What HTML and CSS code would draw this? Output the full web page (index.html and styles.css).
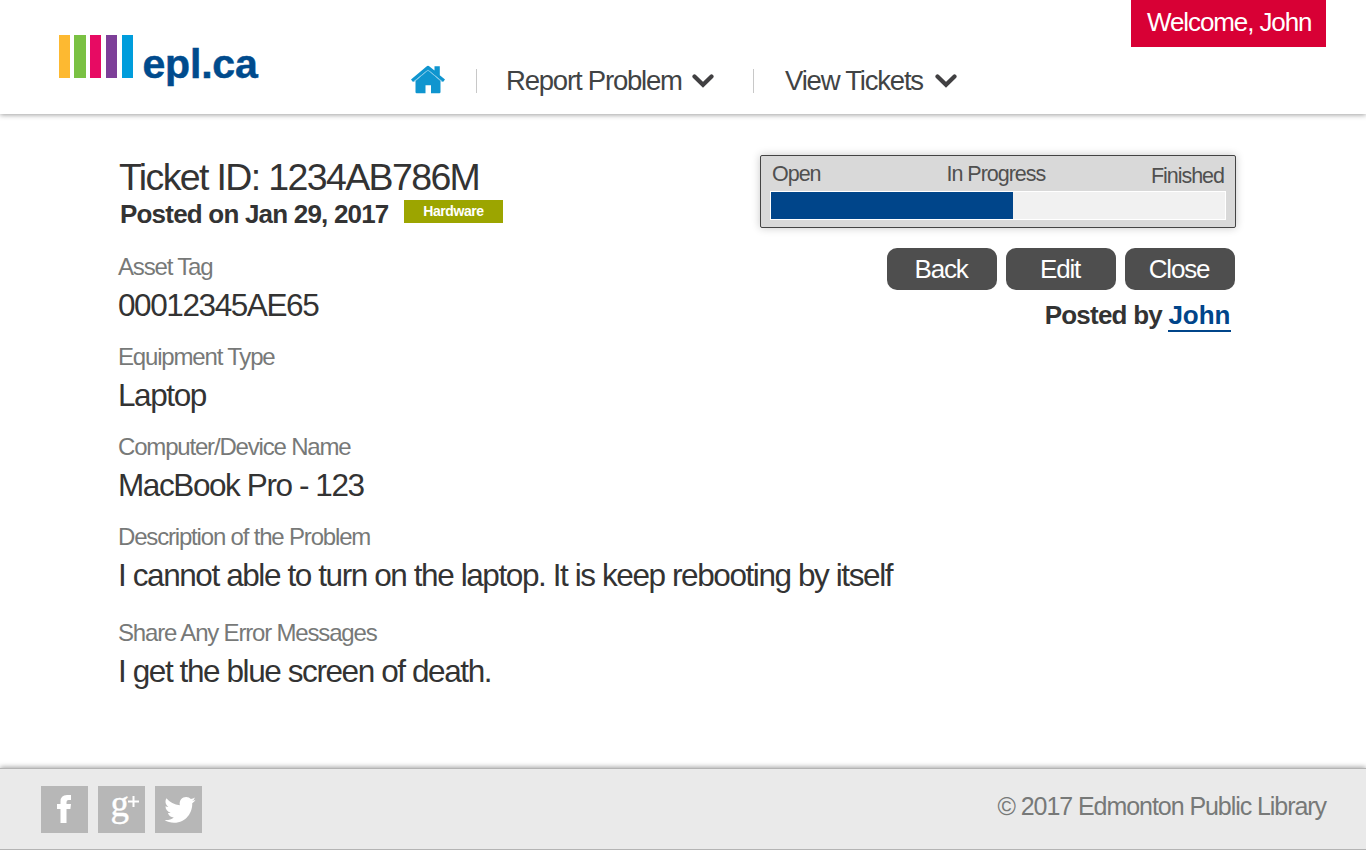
FILE: index.html
```html
<!DOCTYPE html>
<html lang="en">
<head>
<meta charset="utf-8">
<title>epl.ca – Ticket</title>
<link rel="stylesheet" href="styles.css">
</head>
<body>
<div class="page">
  <header class="header">
    <div class="logo">
      <div class="bars"><i class="bar yellow"></i><i class="bar green"></i><i class="bar pink"></i><i class="bar purple"></i><i class="bar blue"></i></div>
      <span class="logo-text">epl.ca</span>
    </div>
    <nav class="nav">
      <svg class="home" viewBox="0 0 34 29"><path fill="#0f95cf" d="M4.500 16 17 5l12.500 11V27q0 1.200-1.200 1.200H20v-8h-5.500v8H5.700Q4.500 28.200 4.500 27Z"/><path fill="#0f95cf" d="M0 14.600 15.500 1.400q1.500-1.200 3 0L23.500 5.600V1.200h5.300v9l5.200 4.400-2 2.300L17 4.800 2 16.900Z"/><path fill="none" stroke="#6fbfe5" stroke-width=".8" d="M3 16.500 17 5.300l14 11.200"/></svg>
      <i class="rule first"></i>
      <span class="item report">Report Problem</span>
      <svg class="chev" viewBox="0 0 22 14"><path d="M2.500 2.500 11 10.800l8.500-8.300"/></svg>
      <i class="rule second"></i>
      <span class="item tickets">View Tickets</span>
      <svg class="chev last" viewBox="0 0 22 14"><path d="M2.500 2.500 11 10.800l8.500-8.300"/></svg>
    </nav>
    <div class="welcome">Welcome, John</div>
  </header>

  <main class="main">
    <section class="details">
      <h1 class="title">Ticket ID: 1234AB786M</h1>
      <div class="posted"><span class="date">Posted on Jan 29, 2017</span><span class="tag">Hardware</span></div>
      <dl class="fields">
        <div class="field"><dt>Asset Tag</dt><dd>00012345AE65</dd></div>
        <div class="field"><dt>Equipment Type</dt><dd>Laptop</dd></div>
        <div class="field"><dt>Computer/Device Name</dt><dd>MacBook Pro - 123</dd></div>
        <div class="field tall"><dt>Description of the Problem</dt><dd>I cannot able to turn on the laptop. It is keep rebooting by itself</dd></div>
        <div class="field"><dt>Share Any Error Messages</dt><dd>I get the blue screen of death.</dd></div>
      </dl>
    </section>
    <aside class="side">
      <div class="status">
        <div class="steps"><span class="open">Open</span><span class="progress">In Progress</span><span class="finished">Finished</span></div>
        <div class="track"><div class="fill"></div></div>
      </div>
      <div class="buttons"><button>Back</button><button>Edit</button><button>Close</button></div>
      <p class="by">Posted by <a class="user">John</a></p>
    </aside>
  </main>

  <footer class="footer">
    <div class="social">
      <svg viewBox="0 0 47 47"><path fill="#fff" d="M19.500 37V23H16v-5h3.500v-2.500Q19.500 9 26 9h4v5h-2.500q-2 0-2 2v2H30l-.6 5h-3.900v14Z"/></svg>
      <svg viewBox="0 0 47 47"><text class="g-letter" x="12.500" y="29.500" textLength="18.500" lengthAdjust="spacingAndGlyphs">g</text><path fill="none" stroke="#fff" stroke-width="2" d="M35.500 10v11M30 15.500h11"/></svg>
      <svg viewBox="0 0 47 47"><path fill="#fff" transform="translate(-1.400 -1.300) scale(1.050)" d="M40 14.300a12 12 0 0 1-3.200 3.300c.4 8.500-5.600 18.600-17.300 18.600-3.400 0-6.500-.9-9-2.600 3.200.3 6.300-.5 8.700-2.400-2.700-.2-4.800-1.900-5.600-4.300 1 .2 1.800.1 2.600-.1-3-.8-4.900-3.300-4.900-6.200.9.400 1.800.7 2.800.7-2.800-2.100-3.500-5.500-1.900-8.300 3.200 4 7.500 6.200 12.800 6.500-1-4.500 2.200-7.800 6-7.800 1.800 0 3.400.7 4.500 1.900a12 12 0 0 0 3.900-1.500 6 6 0 0 1-2.700 3.400c1.200-.2 2.300-.6 3.300-1.200Z"/></svg>
    </div>
    <span class="copy">© 2017 Edmonton Public Library</span>
  </footer>
</div>
</body>
</html>
```
FILE: styles.css
```css
* { box-sizing: border-box; }
body {
  margin: 0;
  background: #fff;
  color: #333;
  font-family: "Liberation Sans", Arial, sans-serif;
}
.page {
  width: 1366px;
  height: 850px;
  display: flex;
  flex-direction: column;
  overflow: hidden;
}

/* Header */
.header {
  height: 114px;
  flex: none;
  display: flex;
  align-items: flex-start;
  box-shadow: 0 1px 5px rgba(0, 0, 0, .38);
}
.logo { display: flex; width: 410px; padding: 35px 0 0 58.500px; }
.bars { display: flex; gap: 4.700px; width: 76px; }
.bar { width: 11.200px; height: 43px; flex: none; }
.yellow { background: #fdb931; }
.green { background: #7ac143; }
.pink { background: #e70b63; }
.purple { background: #7d3f98; }
.blue { background: #009ddc; }
.logo-text {
  margin: 5px 0 0 8px;
  font-size: 41px;
  line-height: 48px;
  font-weight: bold;
  letter-spacing: -.2px;
  color: #004b8d;
  -webkit-text-stroke: .5px #004b8d;
}
.nav { display: flex; width: 721px; padding-top: 64px; }
.home { width: 34px; height: 29px; margin: 1px 1px 0 1px; }
.rule { width: 1px; height: 24px; margin-top: 5px; background: #c8c8c8; }
.rule.first { margin-left: 30px; }
.rule.second { margin-left: 39px; }
.item { font-size: 27.500px; line-height: 34px; letter-spacing: -1.200px; color: #414344; white-space: nowrap; }
.report { width: 186px; margin-left: 29px; }
.tickets { width: 150px; margin-left: 31px; }
.chev { width: 22px; height: 14px; margin-top: 10px; }
.chev path { fill: none; stroke: #414042; stroke-width: 4.200; stroke-linecap: round; }
.welcome {
  width: 195px;
  height: 47px;
  padding-left: 16px;
  background: #d80035;
  color: #fff;
  font-size: 26px;
  line-height: 45px;
  letter-spacing: -1.100px;
  white-space: nowrap;
}

/* Ticket */
.main { height: 654px; flex: none; display: flex; padding-left: 118px; }
.details { width: 642px; padding-top: 42px; flex: none; }
.title {
  margin: 0 0 0 1px;
  font-size: 37.500px;
  line-height: 42px;
  font-weight: normal;
  letter-spacing: -1.640px;
}
.posted { display: flex; align-items: flex-start; height: 54px; padding-left: 2px; }
.date { width: 284px; font-size: 26px; line-height: 32px; font-weight: bold; letter-spacing: -.8px; }
.tag {
  width: 99px;
  height: 23px;
  margin-top: 2px;
  background: #9ca500;
  color: #fff;
  font-size: 14px;
  line-height: 23px;
  font-weight: bold;
  letter-spacing: -.03em;
  text-align: center;
}
.fields { margin: 0; }
.field { height: 90px; }
.field.tall { height: 96px; }
.field dt { height: 33px; font-size: 24px; line-height: 30px; letter-spacing: -1.180px; color: #777978; }
.field dd { margin: 0; font-size: 31.500px; line-height: 40px; letter-spacing: -1.410px; white-space: nowrap; }

.side { width: 476px; padding-top: 41px; }
.status {
  height: 73px;
  padding: 0 9px 0 10px;
  background: #d9d9d9;
  border: 1px solid #444;
  border-radius: 2px;
  box-shadow: 0 0 8px rgba(0, 0, 0, .22);
}
.steps {
  display: flex;
  height: 35px;
  padding: 5px 0 0 1px;
  font-size: 21.500px;
  line-height: 27px;
  letter-spacing: -1.020px;
  color: #505050;
  white-space: nowrap;
}
.open { width: 174.500px; }
.progress { flex: 1; }
.finished { padding: 2px 2px 0 0; }
.track { height: 29px; margin-left: -1px; background: #f1f1f1; border: 1px solid #fff; }
.fill { width: 242px; height: 27px; background: #00458a; }
.buttons { display: flex; justify-content: flex-end; gap: 9px; margin: 20px 1px 0 0; }
.buttons button {
  width: 110px;
  height: 42px;
  padding: 0 2px 0 0;
  border: 0;
  border-radius: 10px;
  background: #4e4e4e;
  color: #fff;
  font: 26px/42px "Liberation Sans", Arial, sans-serif;
  letter-spacing: -1.200px;
}
.by { margin: 10px 5.500px 0 0; text-align: right; font-size: 26px; line-height: 30px; font-weight: bold; letter-spacing: -.03em; }
.user { display: inline-block; color: #00458a; border-bottom: 2px solid #00458a; letter-spacing: 0; }

/* Footer */
.footer {
  height: 82px;
  flex: none;
  display: flex;
  justify-content: space-between;
  padding: 16px 40px 0 41px;
  background: #eaeaea;
  border-top: 1px solid #b4b4b4;
  border-bottom: 1px solid #b4b4b4;
  box-shadow: 0 -1px 5px rgba(0, 0, 0, .36);
}
.social { display: flex; gap: 10px; height: 48px; padding-top: 1px; }
.social svg { width: 47px; height: 47px; background: #b7b7b7; overflow: visible; }
.g-letter { font: 38px "Liberation Serif", "Times New Roman", serif; fill: #fff; stroke: #fff; stroke-width: .4px; }
.copy { font-size: 25px; line-height: 43px; letter-spacing: -1.060px; color: #777978; }
```
